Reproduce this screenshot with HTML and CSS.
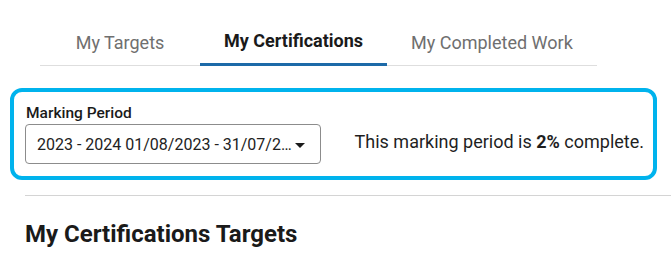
FILE: index.html
```html
<!DOCTYPE html>
<html lang="en">
<head>
<meta charset="utf-8">
<title>My Certifications</title>
<link rel="stylesheet" href="styles.css">
</head>
<body>
  <nav class="tabs">
    <a class="tab tab-first">My Targets</a>
    <a class="tab tab-active">My Certifications</a>
    <a class="tab">My Completed Work</a>
  </nav>

  <section class="period-box">
    <div class="period-field">
      <label class="period-label">Marking Period</label>
      <div class="period-select">
        <span class="period-value">2023 - 2024 01/08/2023 - 31/07/2…</span>
        <svg class="caret" width="10" height="5" viewBox="0 0 10 5"><path d="M0 0H10L5 5Z" fill="#1a1a1a"/></svg>
      </div>
    </div>
    <p class="period-status">This marking period is <strong>2%</strong> complete.</p>
  </section>

  <hr class="divider">

  <h2 class="section-title">My Certifications Targets</h2>
</body>
</html>
```

FILE: styles.css
```css
* { box-sizing: border-box; }

body {
  margin: 0;
  font-family: Roboto, "Liberation Sans", sans-serif;
  color: #1f1f1f;
  background: #fff;
}

.tabs {
  display: flex;
  margin-left: 40px;
  width: 557px;
  border-bottom: 1px solid #dedede;
}

.tab {
  display: block;
  padding: 32px 24px 10px;
  font-size: 18px;
  line-height: 21px;
  color: #6f6f6f;
  text-align: center;
  border-bottom: 3px solid transparent;
  margin-bottom: -1px;
  white-space: nowrap;
}

.tab-first { min-width: 160px; }

.tab-active {
  padding-top: 30px;
  padding-bottom: 12px;
  color: #1a1a1a;
  font-weight: 700;
  border-bottom-color: #1d6aa8;
}

.period-box {
  margin: 22px 0 0 10px;
  width: 647px;
  height: 92px;
  border: 4px solid #00b3ed;
  border-radius: 12px;
  padding: 13px 9px 12px 11px;
  display: flex;
  justify-content: space-between;
  align-items: last baseline;
}

.period-field {
  display: flex;
  flex-direction: column;
}

.period-label {
  margin-left: 1px;
  font-size: 15.5px;
  line-height: 16px;
  font-weight: 500;
  color: #1a1a1a;
}

.period-select {
  margin-top: 3px;
  width: 296px;
  height: 40px;
  border: 1px solid #8c8c8c;
  border-radius: 4px;
  padding: 0 15px 0 11px;
  display: flex;
  align-items: center;
  justify-content: space-between;
}

.period-value {
  font-size: 16px;
  color: #222;
  white-space: nowrap;
}

.caret { flex: none; margin-top: 2px; }

.period-status {
  margin: 0;
  font-size: 18px;
  color: #1f1f1f;
}

.period-status strong { font-weight: 700; }

.divider {
  margin: 15px 0 0 25px;
  border: 0;
  border-top: 1px solid #d4d4d4;
}

.section-title {
  margin: 24px 0 0 25px;
  font-size: 24px;
  line-height: 28px;
  font-weight: 700;
  color: #1a1a1a;
}
```
